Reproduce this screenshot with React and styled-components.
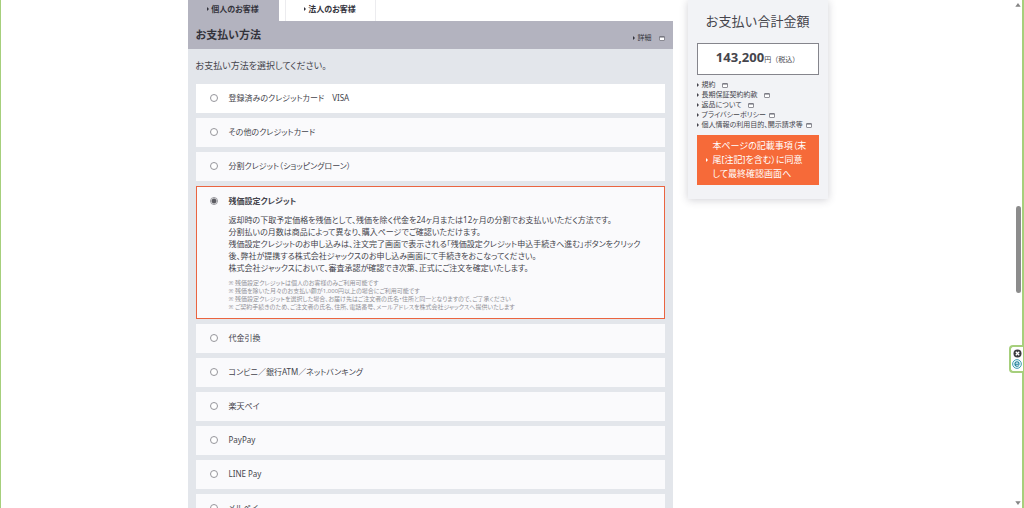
import React, { useState } from "react";
import styled, { createGlobalStyle, css } from "styled-components";

const GlobalStyle = createGlobalStyle`
  * { box-sizing: border-box; }
  body {
    margin: 0;
    background: #fff;
    color: #45454c;
    font-family: "Noto Sans", "Noto Sans CJK JP", sans-serif;
    font-size: 8px;
    line-height: 12px;
  }
  h1, h2, p, ul { margin: 0; padding: 0; }
  ul { list-style: none; }
  a { color: inherit; text-decoration: none; }
  button { font-family: inherit; border: 0; cursor: pointer; }
`;

const proportional = css`
  font-feature-settings: "palt";
`;

const Screen = styled.div`
  display: flex;
  height: 100vh;
  overflow: hidden;
  border-left: 1px solid #a6cf7c;
  border-right: 2px solid #a6cf7c;
`;

const Viewport = styled.div`
  flex: 1;
  min-width: 0;
  overflow: hidden;
`;

const Page = styled.div`
  display: flex;
  align-items: flex-start;
  gap: 15px;
  max-width: 640px;
  margin: 0 auto;
`;

const Main = styled.main`
  flex: 1;
  min-width: 0;
`;

const Tabs = styled.nav`
  display: flex;
  gap: 6px;
`;

const Tab = styled.button`
  display: flex;
  align-items: center;
  justify-content: center;
  gap: 2px;
  width: 91px;
  height: 21px;
  padding: 0 0 4px;
  font-size: 8px;
  line-height: 12px;
  font-weight: 700;
  color: #33333c;
  background: ${(p) => (p.$active ? "#b3b3bf" : "#fff")};
  border: solid ${(p) => (p.$active ? "#b3b3bf" : "#ececef")};
  border-width: 0 1px;
  ${proportional}
`;

const Caret = styled.span`
  flex: none;
  width: 0;
  height: 0;
  border: solid transparent;
  border-width: 2px 0 2px 2px;
  border-left-color: currentColor;
`;

const Bar = styled.header`
  display: flex;
  align-items: center;
  justify-content: space-between;
  height: 28px;
  padding: 0 8px;
  background: #b3b3bf;
  color: #33333c;
`;

const BarTitle = styled.h1`
  font-size: 11px;
  line-height: 16px;
  font-weight: 700;
  ${proportional}
`;

const DetailLink = styled.a`
  display: flex;
  align-items: center;
  gap: 3px;
  padding-top: 6px;
  font-size: 7px;
  line-height: 10px;
  svg { margin-left: 4px; }
`;

const Panel = styled.section`
  padding: 9px 8px;
  background: #e3e6eb;
`;

const Lead = styled.p`
  padding-bottom: 10px;
  font-size: 9px;
  line-height: 16px;
  ${proportional}
`;

const Options = styled.ul`
  display: flex;
  flex-direction: column;
  gap: 5px;
`;

const Option = styled.li`
  padding: ${(p) => (p.$selected ? "8px 13px 7px" : "8px 14px 9px")};
  background: ${(p) => (p.$saved ? "#fff" : "#fafafc")};
  border: ${(p) => (p.$selected ? "1px solid #ea6440" : "0")};
`;

const OptionLabel = styled.label`
  display: flex;
  align-items: center;
  gap: 11px;
  font-size: 8px;
  line-height: 12px;
  font-weight: ${(p) => (p.$selected ? 700 : 400)};
  ${proportional}
`;

const Radio = styled.input`
  appearance: none;
  flex: none;
  width: 8px;
  height: 8px;
  margin: 0;
  border: 1px solid #96969c;
  border-radius: 50%;
  background: ${(p) =>
    p.checked ? "radial-gradient(circle, #5c5c62 0 2px, #fff 3px)" : "#fff"};
`;

const Explanation = styled.p`
  padding: 7px 0 5px 19px;
  font-size: 8px;
  line-height: 12px;
  white-space: nowrap;
  ${proportional}
`;

const Notes = styled.ul`
  padding-left: 19px;
  font-size: 6px;
  line-height: 8px;
  color: #929298;
  white-space: nowrap;
  ${proportional}
`;

const Summary = styled.aside`
  width: 140px;
  padding: 11px 9px 14px;
  background: #f2f3f6;
  box-shadow: 0 1px 8px rgba(60, 60, 80, 0.24);
`;

const SummaryTitle = styled.h2`
  padding-bottom: 12px;
  font-size: 13px;
  line-height: 20px;
  font-weight: 400;
  text-align: center;
`;

const Total = styled.p`
  display: flex;
  align-items: baseline;
  justify-content: center;
  padding: 4px 0 5px;
  background: #fff;
  border: 1px solid #85858c;
  font-size: 7px;
  line-height: 19px;
  strong { font-size: 13px; }
`;

const Links = styled.ul`
  padding: 5px 0;
  font-size: 7px;
  line-height: 10px;
  ${proportional}
`;

const PolicyLink = styled.a`
  display: flex;
  align-items: center;
  gap: 3px;
  white-space: nowrap;
  svg { margin-left: ${(p) => (p.$wide ? "3px" : "0")}; }
`;

const Confirm = styled.button`
  display: flex;
  align-items: center;
  gap: 5px;
  width: 100%;
  padding: 4px 9px;
  background: #f66a39;
  color: #fff;
  font-size: 9px;
  line-height: 14px;
  text-align: left;
  white-space: nowrap;
  ${proportional}
`;

const Rail = styled.div`
  display: flex;
  flex-direction: column;
  align-items: center;
  flex: none;
  width: 8px;
  padding: 2px 0;
`;

const RailTrack = styled.div`
  flex: 1;
  width: 5px;
  display: grid;
  grid-template-rows: 198fr 87fr 207fr;
`;

const RailThumb = styled.div`
  grid-row: 2;
  border-radius: 3px;
  background: #8c8c8c;
`;

const Widget = styled.div`
  position: fixed;
  right: 1px;
  top: 68%;
  display: flex;
  flex-direction: column;
  align-items: center;
  gap: 1px;
  width: 14px;
  padding: 2px 1px;
  background: #fff;
  border: 2px solid #a6cf7c;
  border-right: 0;
  border-radius: 4px 0 0 4px;
`;

const WidgetButton = styled.button`
  display: block;
  padding: 0;
  background: none;
  svg { display: block; }
`;

const WindowIcon = () => (
  <svg width="6" height="5" viewBox="0 0 6 5" aria-hidden="true">
    <rect x="0.5" y="0.5" width="5" height="4" rx="0.5" fill="#fff" stroke="#777780" strokeWidth="0.8" />
    <path d="M0.5 1h5" stroke="#666670" strokeWidth="1" />
  </svg>
);

const Arrow = ({ down }) => (
  <svg width="6" height="6" viewBox="0 0 6 6" aria-hidden="true">
    <path d={down ? "M0.3 1.2h5.4L3 5z" : "M0.3 4.8h5.4L3 1z"} fill="#858585" />
  </svg>
);

const METHODS = [
  { id: "saved", label: "登録済みのクレジットカード　VISA" },
  { id: "card", label: "その他のクレジットカード" },
  { id: "loan", label: "分割クレジット（ショッピングローン）" },
  { id: "residual", label: "残価設定クレジット" },
  { id: "cod", label: "代金引換" },
  { id: "bank", label: "コンビニ／銀行ATM／ネットバンキング" },
  { id: "rakuten", label: "楽天ペイ" },
  { id: "paypay", label: "PayPay" },
  { id: "line", label: "LINE Pay" },
  { id: "merpay", label: "メルペイ" },
];

const POLICIES = [
  { label: "規約", wide: true },
  { label: "長期保証契約約款", wide: true },
  { label: "返品について", wide: true },
  { label: "プライバシーポリシー" },
  { label: "個人情報の利用目的、開示請求等" },
];

const ResidualDetails = () => (
  <>
    <Explanation>
      返却時の下取予定価格を残価として、残価を除く代金を24ヶ月または12ヶ月の分割でお支払いいただく方法です。
      <br />
      分割払いの月数は商品によって異なり、購入ページでご確認いただけます。
      <br />
      残価設定クレジットのお申し込みは、注文完了画面で表示される「残価設定クレジット申込手続きへ進む」ボタンをクリック
      <br />
      後、弊社が提携する株式会社ジャックスのお申し込み画面にて手続きをおこなってください。
      <br />
      株式会社ジャックスにおいて、審査承認が確認でき次第、正式にご注文を確定いたします。
    </Explanation>
    <Notes>
      <li>※ 残価設定クレジットは個人のお客様のみご利用可能です</li>
      <li>※ 残価を除いた月々のお支払い額が1,000円以上の場合にご利用可能です</li>
      <li>※ 残価設定クレジットを選択した場合、お届け先はご注文者の氏名・住所と同一となりますので、ご了承ください</li>
      <li>※ ご契約手続きのため、ご注文者の氏名、住所、電話番号、メールアドレスを株式会社ジャックスへ提供いたします</li>
    </Notes>
  </>
);

export default function App() {
  const [method, setMethod] = useState("residual");

  return (
    <>
      <GlobalStyle />
      <Screen>
        <Viewport>
          <Page>
            <Main>
              <Tabs>
                <Tab type="button" $active><Caret />個人のお客様</Tab>
                <Tab type="button"><Caret />法人のお客様</Tab>
              </Tabs>
              <Bar>
                <BarTitle>お支払い方法</BarTitle>
                <DetailLink href="#details"><Caret />詳細 <WindowIcon /></DetailLink>
              </Bar>
              <Panel>
                <Lead>お支払い方法を選択してください。</Lead>
                <Options>
                  {METHODS.map(({ id, label }) => (
                    <Option key={id} $selected={method === id} $saved={id === "saved"}>
                      <OptionLabel $selected={method === id}>
                        <Radio
                          type="radio"
                          name="method"
                          value={id}
                          checked={method === id}
                          onChange={() => setMethod(id)}
                        />
                        {label}
                      </OptionLabel>
                      {id === "residual" && method === id && <ResidualDetails />}
                    </Option>
                  ))}
                </Options>
              </Panel>
            </Main>
            <Summary>
              <SummaryTitle>お支払い合計金額</SummaryTitle>
              <Total><strong>143,200</strong>円（税込）</Total>
              <Links>
                {POLICIES.map(({ label, wide }) => (
                  <li key={label}>
                    <PolicyLink href="#policy" $wide={wide}><Caret />{label}<WindowIcon /></PolicyLink>
                  </li>
                ))}
              </Links>
              <Confirm type="button">
                <Caret />
                <span>
                  本ページの記載事項（末
                  <br />
                  尾[注記]を含む）に同意
                  <br />
                  して最終確認画面へ
                </span>
              </Confirm>
            </Summary>
          </Page>
        </Viewport>
        <Rail>
          <Arrow />
          <RailTrack><RailThumb /></RailTrack>
          <Arrow down />
        </Rail>
        <Widget>
          <WidgetButton type="button" aria-label="閉じる">
            <svg width="9" height="9" viewBox="0 0 9 9">
              <circle cx="4.5" cy="4.5" r="4" fill="#3c3c40" />
              <path d="M2.8 2.8l3.4 3.4M6.2 2.8L2.8 6.2" stroke="#fff" strokeWidth="1.3" />
            </svg>
          </WidgetButton>
          <WidgetButton type="button" aria-label="ツールを開く">
            <svg width="10" height="10" viewBox="0 0 10 10">
              <circle cx="5" cy="5" r="4.4" fill="#e4f6f8" stroke="#3796ab" strokeWidth="0.9" />
              <path d="M2.9 5.2H7C7.2 2 2.9 2 2.9 5.1c0 2.5 2.9 2.7 3.9 1.4" fill="none" stroke="#237f99" strokeWidth="1.1" />
            </svg>
          </WidgetButton>
        </Widget>
      </Screen>
    </>
  );
}
